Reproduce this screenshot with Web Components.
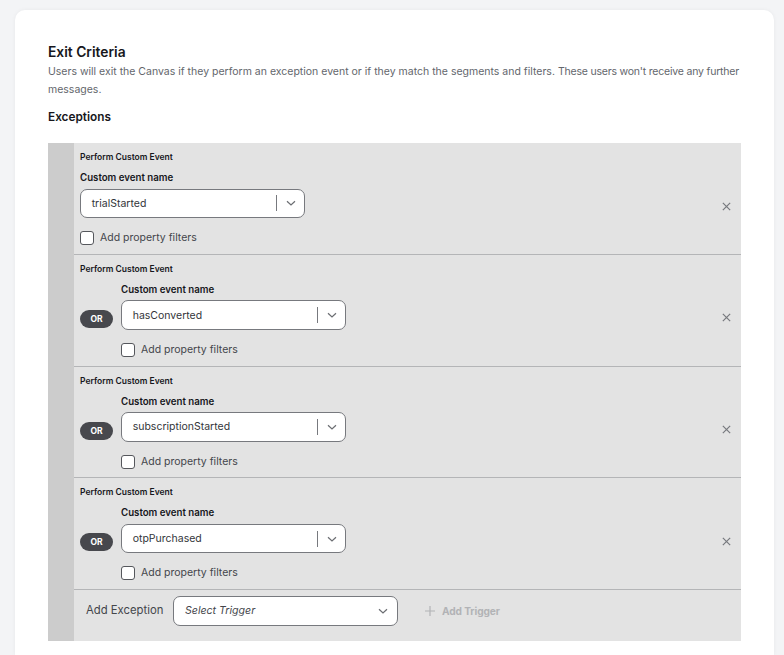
<!DOCTYPE html>
<html>
<head>
<meta charset="utf-8">
<title>Exit Criteria</title>
<style>
  html, body { margin: 0; height: 655px; overflow: hidden; background: #f3f4f6; }
  body { font-family: "Inter", "Liberation Sans", sans-serif; }
</style>
</head>
<body>
<exit-card>
  <exception-row name="trialStarted"></exception-row>
  <exception-row name="hasConverted" or></exception-row>
  <exception-row name="subscriptionStarted" or></exception-row>
  <exception-row name="otpPurchased" or></exception-row>
  <add-exception></add-exception>
</exit-card>

<script>
const chevron = `<svg width="12" height="12" viewBox="0 0 12 12" fill="none" stroke="#6b6d72" stroke-width="1.2"><path d="M2 4.2 L6 8 L10 4.2"/></svg>`;

class ExitCard extends HTMLElement {
  constructor() {
    super();
    this.attachShadow({ mode: "open" }).innerHTML = `
      <style>
        :host { display: block; margin: 10px 10px 0 15px; padding: 35px 33px 0; height: 645px;
                background: #fff; border-radius: 10px 10px 0 0; box-sizing: border-box;
                box-shadow: 0 0 4px rgba(0,0,0,.05); color: #17171c; }
        h2 { margin: 0; font-size: 13.8px; line-height: 14px; font-weight: 600; }
        p { margin: 4px 0 0; font-size: 10.5px; line-height: 18px; color: #63666c; white-space: nowrap; }
        p span { letter-spacing: -0.2px; }
        h3 { margin: 10px 0 0; font-size: 11.8px; line-height: 16px; font-weight: 600; }
        .panel { margin-top: 18px; background: #e3e3e3; border-left: 26px solid #cccccc; }
      </style>
      <h2>Exit Criteria</h2>
      <p>Users will exit the Canvas if they perform an exception event or if they match the segments and filters. <span>These users won't receive any further</span><br>messages.</p>
      <h3>Exceptions</h3>
      <div class="panel"><slot></slot></div>`;
  }
}

class EventSelect extends HTMLElement {
  constructor() {
    super();
    this.attachShadow({ mode: "open" }).innerHTML = `
      <style>
        :host { display: flex; align-items: center; box-sizing: border-box; width: 225px; height: 29.5px;
                background: #fff; border: 1px solid #77797e; border-radius: 7px; padding-left: 10.7px;
                font-size: 10.5px; color: #33353a; }
        .value { flex: 1; }
        .sep { width: 1px; height: 16px; background: #77797e; }
        .arrow { width: 27px; display: flex; justify-content: center; }
      </style>
      <span class="value">${this.getAttribute("value") || ""}</span>
      <span class="sep"></span>
      <span class="arrow">${chevron}</span>`;
  }
}

class ExceptionRow extends HTMLElement {
  constructor() {
    super();
    const name = this.getAttribute("name");
    const or = this.hasAttribute("or");
    this.attachShadow({ mode: "open" }).innerHTML = `
      <style>
        :host { display: block; box-sizing: border-box; height: 111.8px; padding: 8px 0 0 6px;
                border-bottom: 1px solid #b4b5b7; color: #17171c; }
        .title { font-size: 8.5px; line-height: 12px; font-weight: 600; }
        .body { display: flex; align-items: center; }
        .or { flex: none; width: 33px; height: 18px; margin: 6px 8px 0 0; border-radius: 9px; background: #47484d;
              color: #fff; font-size: 8.5px; font-weight: 700; display: flex; align-items: center; justify-content: center; }
        .field { flex: 1; }
        label.name { display: block; margin-top: 9px; font-size: 9.7px; line-height: 12px; font-weight: 600; }
        event-select { margin-top: 4.5px; }
        .check { display: flex; align-items: center; gap: 6px; margin-top: 13px; font-size: 10.5px; line-height: 14px; color: #44464b; }
        .box { width: 12px; height: 12px; background: #fff; border: 1px solid #55575c; border-radius: 3px; }
        .close { flex: none; width: 11px; height: 11px; margin: 4px 9px 0 0; }
      </style>
      <div class="title">Perform Custom Event</div>
      <div class="body">
        ${or ? `<span class="or">OR</span>` : ""}
        <div class="field">
          <label class="name">Custom event name</label>
          <event-select value="${name}"></event-select>
          <div class="check"><span class="box"></span>Add property filters</div>
        </div>
        <svg class="close" viewBox="0 0 12 12" fill="none" stroke="#77797e" stroke-width="1.3"><path d="M2 2 L10 10 M10 2 L2 10"/></svg>
      </div>`;
  }
}

class AddException extends HTMLElement {
  constructor() {
    super();
    this.attachShadow({ mode: "open" }).innerHTML = `
      <style>
        :host { display: flex; align-items: flex-start; box-sizing: border-box; height: 50.8px; padding: 6px 0 0 12px; }
        .label { font-size: 11.3px; line-height: 29px; color: #44464b; width: 87px; white-space: nowrap; }
        .select { display: flex; align-items: center; justify-content: space-between; box-sizing: border-box;
                  width: 225px; height: 29.5px; padding: 0 8px 0 11px; background: #fff; border: 1px solid #77797e;
                  border-radius: 7px; font-size: 10.6px; font-style: italic; color: #44464b; }
        .add { display: flex; align-items: center; gap: 6px; margin-left: 26px; height: 29.5px; font-size: 10.2px;
               font-weight: 700; letter-spacing: -0.1px; color: #b2b3b6; }
      </style>
      <span class="label">Add Exception</span>
      <div class="select"><span>Select Trigger</span>${chevron}</div>
      <div class="add"><svg width="12" height="12" viewBox="0 0 12 12" stroke="#b2b3b6" stroke-width="1.2"><path d="M6 1 V11 M1 6 H11"/></svg>Add Trigger</div>`;
  }
}

customElements.define("exit-card", ExitCard);
customElements.define("event-select", EventSelect);
customElements.define("exception-row", ExceptionRow);
customElements.define("add-exception", AddException);
</script>
</body>
</html>
